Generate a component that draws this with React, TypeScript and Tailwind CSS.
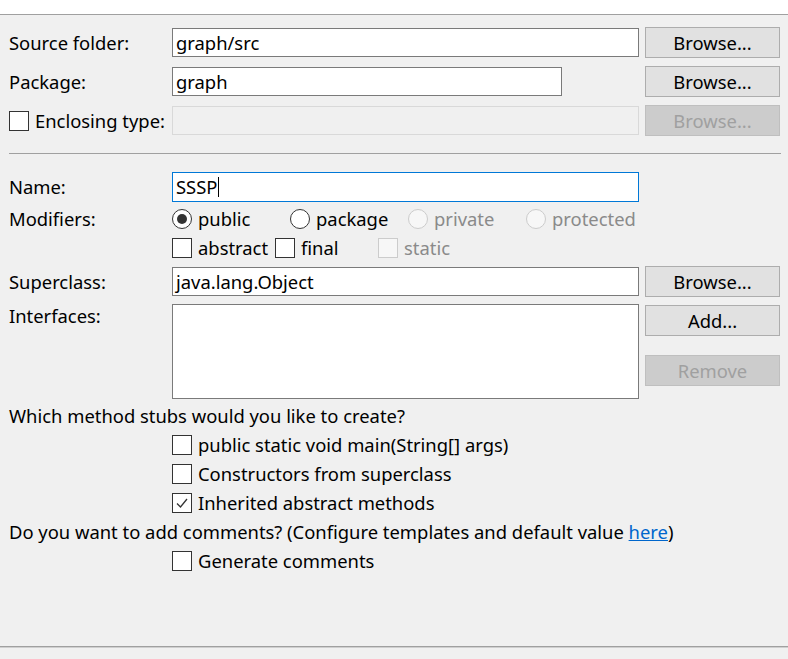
import React from "react";

const font = { fontFamily: '"Noto Sans", "Noto Sans CJK SC", sans-serif' };

function Box({ checked = false, disabled = false }: { checked?: boolean; disabled?: boolean }) {
  return (
    <span
      className={`inline-flex w-[20px] h-[20px] shrink-0 items-center justify-center border ${
        disabled ? "border-[#cccccc] bg-[#f7f7f7]" : "border-[#333333] bg-white"
      }`}
    >
      {checked && (
        <svg width="14" height="14" viewBox="0 0 14 14">
          <path d="M2 7.5 L5.5 11 L12 3" fill="none" stroke="#333" strokeWidth="1.3" />
        </svg>
      )}
    </span>
  );
}

function Radio({ checked = false, disabled = false }: { checked?: boolean; disabled?: boolean }) {
  return (
    <span
      className={`inline-flex w-[20px] h-[20px] shrink-0 items-center justify-center rounded-full border ${
        disabled ? "border-[#cccccc] bg-[#f7f7f7]" : "border-[#333333] bg-white"
      }`}
    >
      {checked && <span className="w-[10px] h-[10px] rounded-full bg-[#333333]" />}
    </span>
  );
}

function Btn({ label, disabled = false }: { label: string; disabled?: boolean }) {
  return (
    <div
      className={`w-[135px] h-[31px] flex items-center justify-center border ${
        disabled ? "bg-[#cccccc] border-[#bfbfbf] text-[#a0a0a0]" : "bg-[#e1e1e1] border-[#adadad] text-black"
      }`}
    >
      {label}
    </div>
  );
}

export default function App() {
  return (
    <div className="w-[788px] h-[659px] bg-[#f0f0f0] flex flex-col text-[18.4px] leading-[24px] text-black overflow-hidden" style={font}>
      {/* header band */}
      <div className="h-[14px] bg-white border-b border-[#a0a0a0] box-content" />

      <div className="flex flex-col pl-[9px]">
        {/* Source folder */}
        <div className="mt-[12px] h-[31px] flex items-center">
          <span className="w-[163px]">Source folder:</span>
          <div className="w-[467px] h-[29px] bg-white border border-[#7a7a7a] flex items-center px-[3px]">graph/src</div>
          <div className="ml-[6px]"><Btn label="Browse..." /></div>
        </div>

        {/* Package */}
        <div className="mt-[8px] h-[31px] flex items-center">
          <span className="w-[163px]">Package:</span>
          <div className="w-[390px] h-[29px] bg-white border border-[#7a7a7a] flex items-center px-[3px]">graph</div>
          <div className="ml-[83px]"><Btn label="Browse..." /></div>
        </div>

        {/* Enclosing type */}
        <div className="mt-[8px] h-[31px] flex items-center">
          <span className="w-[163px] flex items-center gap-[6px]">
            <Box />
            Enclosing type:
          </span>
          <div className="w-[467px] h-[29px] bg-[#f0f0f0] border border-[#d9d9d9]" />
          <div className="ml-[6px]"><Btn label="Browse..." disabled /></div>
        </div>

        {/* separator */}
        <div className="mt-[17px] h-px w-[772px] bg-[#a0a0a0]" />

        {/* Name */}
        <div className="mt-[18px] h-[30px] flex items-center">
          <span className="w-[163px]">Name:</span>
          <div className="w-[467px] h-[30px] bg-white border border-[#0078d7] flex items-center px-[3px]">
            SSSP<span className="w-px h-[20px] bg-black ml-px" />
          </div>
        </div>

        {/* Modifiers */}
        <div className="mt-[2px] h-[29px] flex items-center">
          <span className="w-[163px]">Modifiers:</span>
          <div className="w-[118px] flex items-center gap-[6px]"><Radio checked />public</div>
          <div className="w-[118px] flex items-center gap-[6px]"><Radio />package</div>
          <div className="w-[118px] flex items-center gap-[6px] text-[#8a8a8a]"><Radio disabled />private</div>
          <div className="flex items-center gap-[6px] text-[#8a8a8a]"><Radio disabled />protected</div>
        </div>

        <div className="h-[29px] flex items-center">
          <span className="w-[163px]" />
          <div className="w-[103px] flex items-center gap-[6px]"><Box />abstract</div>
          <div className="w-[103px] flex items-center gap-[6px]"><Box />final</div>
          <div className="flex items-center gap-[6px] text-[#8a8a8a]"><Box disabled />static</div>
        </div>

        {/* Superclass */}
        <div className="mt-[4px] h-[31px] flex items-center">
          <span className="w-[163px]">Superclass:</span>
          <div className="w-[467px] h-[29px] bg-white border border-[#7a7a7a] flex items-center px-[3px]">java.lang.Object</div>
          <div className="ml-[6px]"><Btn label="Browse..." /></div>
        </div>

        {/* Interfaces */}
        <div className="mt-[7px] h-[95px] flex items-start">
          <span className="w-[163px]">Interfaces:</span>
          <div className="w-[467px] h-[95px] bg-white border border-[#7a7a7a]" />
          <div className="ml-[6px] pt-px flex flex-col gap-[19px]">
            <Btn label="Add..." />
            <Btn label="Remove" disabled />
          </div>
        </div>

        {/* Method stubs */}
        <div className="mt-[2px] h-[29px] flex items-center">Which method stubs would you like to create?</div>
        <div className="h-[29px] flex items-center pl-[163px] gap-[6px]"><Box />public static void main(String[] args)</div>
        <div className="h-[29px] flex items-center pl-[163px] gap-[6px]"><Box />Constructors from superclass</div>
        <div className="h-[29px] flex items-center pl-[163px] gap-[6px]"><Box checked />Inherited abstract methods</div>
        <div className="h-[29px] flex items-center">
          Do you want to add comments? (Configure templates and default value&nbsp;
          <span className="text-[#0066cc] underline">here</span>)
        </div>
        <div className="h-[29px] flex items-center pl-[163px] gap-[6px]"><Box />Generate comments</div>
      </div>

      <div className="flex-1" />
      <div className="h-px bg-[#a0a0a0]" />
      <div className="h-px bg-[#cfcfcf]" />
      <div className="h-[11px]" />
    </div>
  );
}
